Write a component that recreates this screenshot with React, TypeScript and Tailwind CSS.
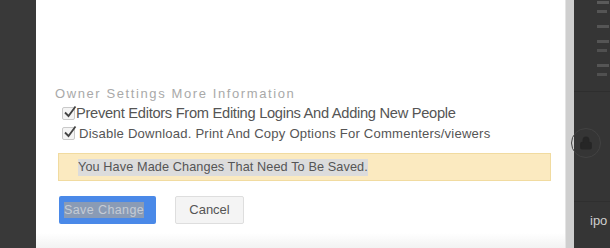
import { Lock } from 'lucide-react';

function Check() {
    return (
        <span className="relative inline-block w-[13px] h-[13px] border border-[#c9c9c9] bg-[#f4f4f4] rounded-[2px] shrink-0">
            <svg viewBox="0 0 14 14" className="absolute -top-[3px] left-0 w-[14px] h-[14px]">
                <path d="M2 7.5 L5.5 11 L12.5 1.5" fill="none" stroke="#444" strokeWidth="1.8" />
            </svg>
        </span>
    );
}

export default function App() {
    return (
        <div className="w-[610px] h-[248px] flex overflow-hidden bg-[#363636]" style={{ fontFamily: '"Liberation Sans", Arial, sans-serif' }}>
            {/* left backdrop */}
            <div className="w-[36px] shrink-0 bg-[#393939]" />

            {/* dialog */}
            <div className="w-[529px] shrink-0 bg-white flex flex-col">
                <div className="h-[86px]" />
                <div className="pl-[19px] pr-[14px]">
                    <div className="text-[13px] tracking-[1.6px] text-[#a9a9a9] leading-[16px]">
                        Owner Settings More Information
                    </div>
                    <label className="flex items-center mt-[2px] pl-[7px] h-[19px]">
                        <Check />
                        <span className="ml-px text-[14.7px] text-[#555] tracking-[-0.3px] leading-[19px]">
                            Prevent Editors From Editing Logins And Adding New People
                        </span>
                    </label>
                    <label className="flex items-center mt-px pl-[7px] h-[19px]">
                        <Check />
                        <span className="ml-[4px] text-[13.1px] text-[#555] tracking-[0.2px] leading-[19px]">
                            Disable Download. Print And Copy Options For Commenters/viewers
                        </span>
                    </label>

                    <div className="mt-[10px] ml-[3px] w-[493px] h-[28px] bg-[#fbeac0] border border-[#f1dba0] flex items-center pl-[19px]">
                        <span className="bg-[#dcdcdc] text-[12.7px] text-[#555] leading-[17px] tracking-[0.1px]">
                            You Have Made Changes That Need To Be Saved.
                        </span>
                    </div>

                    <div className="flex gap-[19px] mt-[15px] ml-[4px]">
                        <button className="w-[97px] h-[28px] bg-[#4a89e8] rounded-[2px] flex items-center pl-[5px]">
                            <span className="bg-[#8a9bb5] text-[#c5ccd6] text-[12.5px] leading-[16px] tracking-[0.4px]">Save Change</span>
                        </button>
                        <button className="w-[69px] h-[28px] bg-[#f4f4f4] border border-[#dedede] rounded-[2px] text-[#555] text-[13px]">
                            Cancel
                        </button>
                    </div>
                </div>
                <div className="flex-1" />
                <div className="h-[15px] bg-gradient-to-b from-white to-[#f2f2f2]" />
            </div>

            {/* scrollbar strip */}
            <div className="w-[9px] shrink-0 bg-[#cfcfcf] border-l border-[#e4e4e4]" />

            {/* right backdrop */}
            <div className="flex-1 flex flex-col bg-[#353535]">
                <div className="h-[92px] border-b border-[#2e2e2e] pl-[23px] pt-[1px] flex flex-col gap-[6px]">
                    <div className="h-[3px] w-[12px] bg-[#5a5a5a]" />
                    <div className="h-[3px] w-[10px] bg-[#555]" />
                    <div className="h-[3px] w-[12px] bg-[#555] mt-[6px]" />
                    <div className="h-[3px] w-[12px] bg-[#555] mt-[6px]" />
                    <div className="h-[3px] w-[10px] bg-[#505050]" />
                    <div className="h-[3px] w-[12px] bg-[#555] mt-[6px]" />
                    <div className="h-[3px] w-[10px] bg-[#505050]" />
                </div>
                <div className="mt-[36px] ml-[-3px]">
                    <div className="w-[30px] h-[30px] rounded-full border border-[#424242] flex items-center justify-center">
                        <Lock size={14} color="#262626" fill="#262626" />
                    </div>
                </div>
                <div className="mt-[43px] border-t border-[#2f2f2f] pt-[11px] pl-[16px] text-[13px] text-[#cfcfcf] leading-[16px]">
                    ipo
                </div>
            </div>
        </div>
    );
}
